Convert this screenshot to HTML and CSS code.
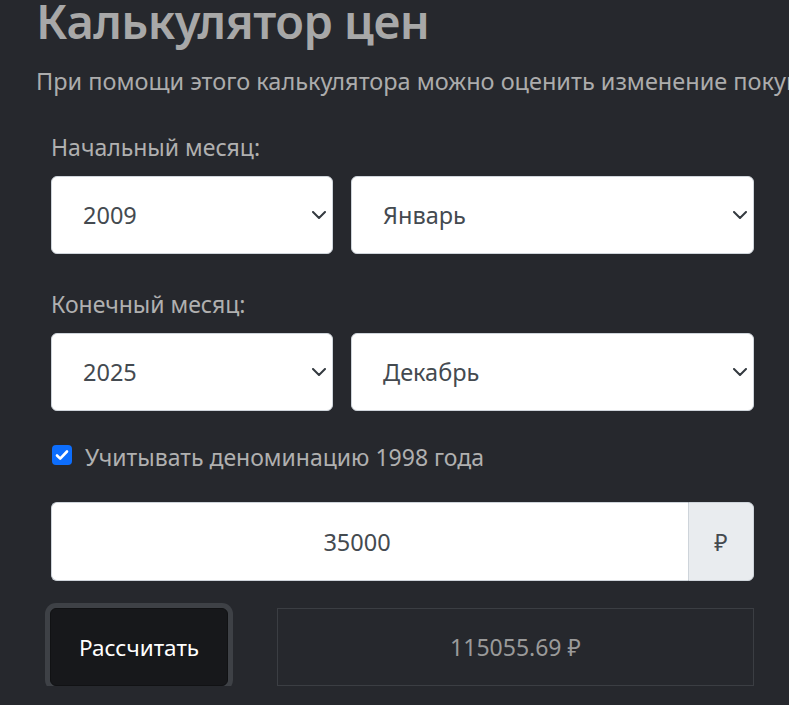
FILE: index.html
```html
<!DOCTYPE html>
<html lang="ru">
<head>
<meta charset="utf-8">
<title>Калькулятор цен</title>
<link rel="stylesheet" href="styles.css">
</head>
<body>
<main class="page">
  <h1 class="title">Калькулятор цен</h1>
  <p class="lead">При помощи этого калькулятора можно оценить изменение покупательной способности рубля</p>
  <form class="form">
    <label class="label label-first">Начальный месяц:</label>
    <div class="row">
      <div class="select"><span>2009</span><svg class="chev" width="14" height="8" viewBox="0 0 14 8"><path d="M1 1l6 6 6-6" fill="none" stroke="#343a40" stroke-width="2" stroke-linecap="round" stroke-linejoin="round"/></svg></div>
      <div class="select"><span>Январь</span><svg class="chev" width="14" height="8" viewBox="0 0 14 8"><path d="M1 1l6 6 6-6" fill="none" stroke="#343a40" stroke-width="2" stroke-linecap="round" stroke-linejoin="round"/></svg></div>
    </div>
    <label class="label label-next">Конечный месяц:</label>
    <div class="row">
      <div class="select"><span>2025</span><svg class="chev" width="14" height="8" viewBox="0 0 14 8"><path d="M1 1l6 6 6-6" fill="none" stroke="#343a40" stroke-width="2" stroke-linecap="round" stroke-linejoin="round"/></svg></div>
      <div class="select"><span>Декабрь</span><svg class="chev" width="14" height="8" viewBox="0 0 14 8"><path d="M1 1l6 6 6-6" fill="none" stroke="#343a40" stroke-width="2" stroke-linecap="round" stroke-linejoin="round"/></svg></div>
    </div>
    <div class="check">
      <span class="box"><svg width="14" height="12" viewBox="0 0 14 12"><path d="M2 6.5l3.2 3.2L12 2.5" fill="none" stroke="#fff" stroke-width="2.6" stroke-linecap="round" stroke-linejoin="round"/></svg></span>
      <span class="check-text">Учитывать деноминацию 1998 года</span>
    </div>
    <div class="group">
      <div class="amount">35000</div>
      <div class="addon">₽</div>
    </div>
    <div class="actions">
      <div class="btn">Рассчитать</div>
      <div class="result">115055.69 ₽</div>
    </div>
  </form>
</main>
</body>
</html>
```
FILE: styles.css
```css
html, body {
  margin: 0;
  padding: 0;
  background: #26282d;
  overflow: hidden;
}
body {
  font-family: "Noto Sans", "Open Sans", sans-serif;
  color: #b4b4b4;
}
.page {
  padding: 0 0 0 36px;
  width: 740px;
}
.title {
  margin: 0;
  font-size: 47px;
  font-weight: 600;
  line-height: 42px;
  color: #a8a8a8;
  letter-spacing: -0.5px;
}
.lead {
  margin: 22px 0 0 0;
  font-size: 23.5px;
  line-height: 34px;
  height: 34px;
  white-space: nowrap;
  overflow: hidden;
  width: 753px;
  color: #acacac;
}
.form {
  display: flex;
  flex-direction: column;
  padding: 0 0 0 15px;
  width: 703px;
  margin-top: 32px;
}
.label {
  display: block;
  font-size: 23px;
  line-height: 34px;
  color: #b0b0b0;
}
.label-next {
  margin-top: 33px;
}
.row {
  display: grid;
  grid-template-columns: 282px 1fr;
  gap: 18px;
  margin-top: 12px;
}
.select {
  position: relative;
  height: 78px;
  box-sizing: border-box;
  background: #fff;
  border: 1px solid #ced4da;
  border-radius: 6px;
  display: flex;
  align-items: center;
  padding-left: 31px;
  font-size: 23.5px;
  color: #444a50;
}
.chev {
  position: absolute;
  right: 6px;
  top: 34px;
}
.check {
  display: flex;
  align-items: center;
  gap: 13px;
  margin-top: 27px;
  height: 34px;
  padding-left: 1px;
}
.box {
  width: 20px;
  height: 20px;
  border-radius: 4px;
  background: #0d6efd;
  display: flex;
  align-items: center;
  justify-content: center;
}
.check-text {
  font-size: 23px;
  line-height: 34px;
  color: #b0b0b0;
  padding-top: 4px;
}
.group {
  display: flex;
  margin-top: 30px;
  height: 79px;
}
.amount {
  flex: 1;
  background: #fff;
  border: 1px solid #ced4da;
  border-right: none;
  border-radius: 6px 0 0 6px;
  display: flex;
  align-items: center;
  justify-content: center;
  padding-right: 26px;
  font-size: 23.5px;
  color: #444a50;
}
.addon {
  width: 66px;
  box-sizing: border-box;
  background: #e9ecef;
  border: 1px solid #ced4da;
  border-radius: 0 6px 6px 0;
  display: flex;
  align-items: center;
  justify-content: center;
  font-size: 23px;
  color: #444a50;
}
.actions {
  display: flex;
  align-items: center;
  gap: 49px;
  margin-top: 27px;
}
.btn {
  width: 178px;
  height: 78px;
  box-sizing: border-box;
  background: #17181b;
  border: 1px solid #111214;
  border-radius: 6px;
  box-shadow: 0 0 0 5px #3e4146;
  display: flex;
  align-items: center;
  justify-content: center;
  color: #fff;
  font-size: 22.5px;
  margin-left: -1px;
}
.result {
  flex: 1;
  height: 78px;
  box-sizing: border-box;
  border: 1px solid #3b3e43;
  display: flex;
  align-items: center;
  justify-content: center;
  font-size: 23px;
  color: #9a9a9a;
}
```
